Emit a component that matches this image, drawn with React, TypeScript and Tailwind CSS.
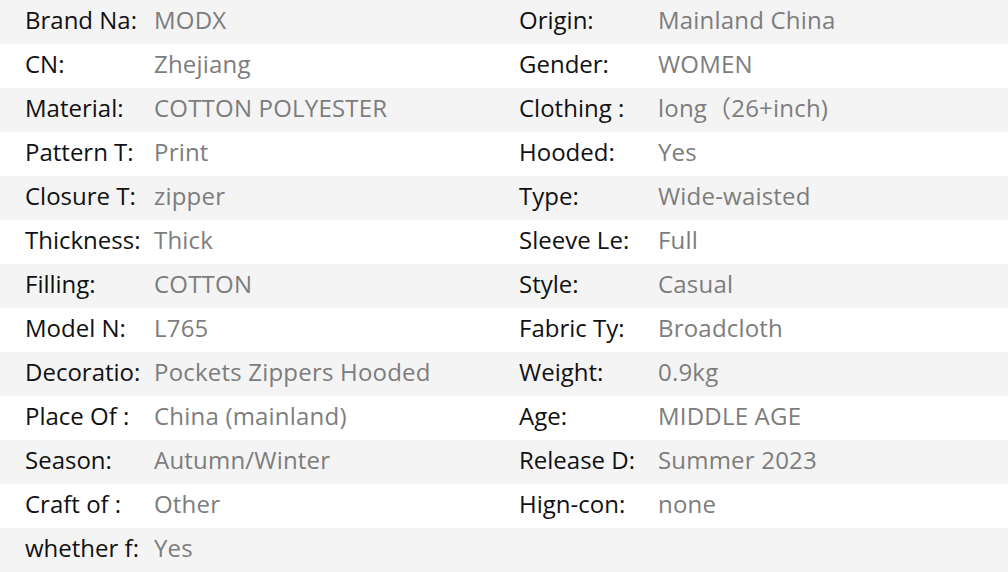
const rows: [string, string, string, string][] = [
  ["Brand Na:", "MODX", "Origin:", "Mainland China"],
  ["CN:", "Zhejiang", "Gender:", "WOMEN"],
  ["Material:", "COTTON POLYESTER", "Clothing :", "long（26+inch)"],
  ["Pattern T:", "Print", "Hooded:", "Yes"],
  ["Closure T:", "zipper", "Type:", "Wide-waisted"],
  ["Thickness:", "Thick", "Sleeve Le:", "Full"],
  ["Filling:", "COTTON", "Style:", "Casual"],
  ["Model N:", "L765", "Fabric Ty:", "Broadcloth"],
  ["Decoratio:", "Pockets Zippers Hooded", "Weight:", "0.9kg"],
  ["Place Of :", "China (mainland)", "Age:", "MIDDLE AGE"],
  ["Season:", "Autumn/Winter", "Release D:", "Summer 2023"],
  ["Craft of :", "Other", "Hign-con:", "none"],
  ["whether f:", "Yes", "", ""],
]

export default function App() {
  return (
    <div
      className="w-[1008px] h-[572px] overflow-hidden bg-white text-[24px]"
      style={{ fontFamily: '"Open Sans", "Noto Sans CJK SC", sans-serif' }}
    >
      {rows.map((r, i) => (
        <div key={i} className={`flex h-[44px] items-center pb-[4px] ${i % 2 === 0 ? "bg-[#f4f4f4]" : "bg-white"}`}>
          <div className="flex w-[494px] pl-[25px]">
            <span className="w-[129px] shrink-0 whitespace-nowrap text-[#111111]">{r[0]}</span>
            <span className="whitespace-nowrap tracking-[0.2px] text-[#7d7d7d]">{r[1]}</span>
          </div>
          <div className="flex pl-[25px]">
            <span className="w-[139px] shrink-0 whitespace-nowrap text-[#111111]">{r[2]}</span>
            <span className="whitespace-nowrap tracking-[0.2px] text-[#7d7d7d]">{r[3]}</span>
          </div>
        </div>
      ))}
    </div>
  )
}
